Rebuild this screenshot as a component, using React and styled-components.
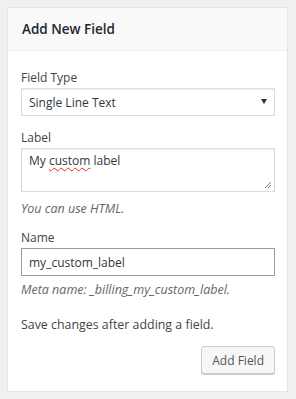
import React from 'react';
import styled, { createGlobalStyle } from 'styled-components';

const Global = createGlobalStyle`
  body {
    margin: 0;
    background: #f1f1f1;
    font-family: "Open Sans", "Noto Sans", sans-serif;
    font-size: 12px;
    color: #444;
  }
`;

const Box = styled.div`
  margin: 7px 0 0 7px;
  width: 279px;
  background: #fff;
  border: 1px solid #e5e5e5;
  box-shadow: 0 1px 1px rgba(0, 0, 0, 0.04);
`;

const Header = styled.div`
  height: 42px;
  display: flex;
  align-items: center;
  padding: 0 14px;
  background: #f9f9f9;
  border-bottom: 1px solid #eee;
`;

const Title = styled.h2`
  margin: 0;
  font-size: 13.5px;
  font-weight: 600;
  color: #23282d;
`;

const Body = styled.div`
  padding: 18px 12px 17px 13px;
`;

const Label = styled.label`
  display: block;
  line-height: 18px;
  margin-top: ${p => p.$gap || 0}px;
  color: #444;
`;

const Control = styled.div`
  position: relative;
  margin-top: 1px;
`;

const Select = styled.select`
  appearance: none;
  width: 100%;
  height: 28px;
  box-sizing: border-box;
  border: 1px solid #ddd;
  background: #fff;
  padding: 0 24px 0 7px;
  font: inherit;
  color: #32373c;
  box-shadow: inset 0 1px 2px rgba(0, 0, 0, 0.07);
`;

const Arrow = styled.svg`
  position: absolute;
  right: 8px;
  top: 11px;
`;

const TextBox = styled.div`
  position: relative;
  height: 44px;
  box-sizing: border-box;
  border: 1px solid #ddd;
  padding: 2px 7px;
  line-height: 20px;
  color: #32373c;
  box-shadow: inset 0 1px 2px rgba(0, 0, 0, 0.07);
`;

const Misspelled = styled.span`
  text-decoration: underline wavy #e22;
  text-decoration-thickness: 1px;
  text-underline-offset: 2px;
`;

const Grip = styled.svg`
  position: absolute;
  right: 2px;
  bottom: 2px;
`;

const Input = styled.input`
  display: block;
  width: 100%;
  height: 28px;
  box-sizing: border-box;
  border: 1px solid #999;
  padding: 0 7px;
  font: inherit;
  color: #32373c;
  background: #fff;
`;

const Hint = styled.p`
  margin: ${p => p.$gap || 0}px 0 0;
  line-height: 18px;
  font-size: 12.5px;
  font-style: italic;
  color: #666;
`;

const Note = styled.p`
  margin: 17px 0 0;
  line-height: 18px;
  font-size: 12.4px;
  color: #444;
`;

const Actions = styled.div`
  display: flex;
  justify-content: flex-end;
  margin-top: 12px;
`;

const Button = styled.button`
  height: 28px;
  padding: 0 10px;
  font: inherit;
  color: #555;
  background: #f7f7f7;
  border: 1px solid #ccc;
  border-radius: 3px;
  box-shadow: 0 1px 0 #ccc;
`;

export default () => (
  <>
    <Global />
    <Box>
      <Header>
        <Title>Add New Field</Title>
      </Header>
      <Body>
        <Label>Field Type</Label>
        <Control>
          <Select defaultValue="text">
            <option value="text">Single Line Text</option>
          </Select>
          <Arrow width="6" height="5" viewBox="0 0 6 5">
            <path d="M0 0h6L3 5z" fill="#333" />
          </Arrow>
        </Control>
        <Label $gap={13}>Label</Label>
        <Control>
          <TextBox>
            My <Misspelled>custom</Misspelled> label
            <Grip width="8" height="8" viewBox="0 0 8 8">
              <path d="M7 1L1 7M7 4L4 7" stroke="#777" strokeWidth="1" />
            </Grip>
          </TextBox>
        </Control>
        <Hint $gap={8}>You can use HTML.</Hint>
        <Label $gap={11}>Name</Label>
        <Control>
          <Input defaultValue="my_custom_label" />
        </Control>
        <Hint $gap={5}>Meta name: _billing_my_custom_label.</Hint>
        <Note>Save changes after adding a field.</Note>
        <Actions>
          <Button>Add Field</Button>
        </Actions>
      </Body>
    </Box>
  </>
);
